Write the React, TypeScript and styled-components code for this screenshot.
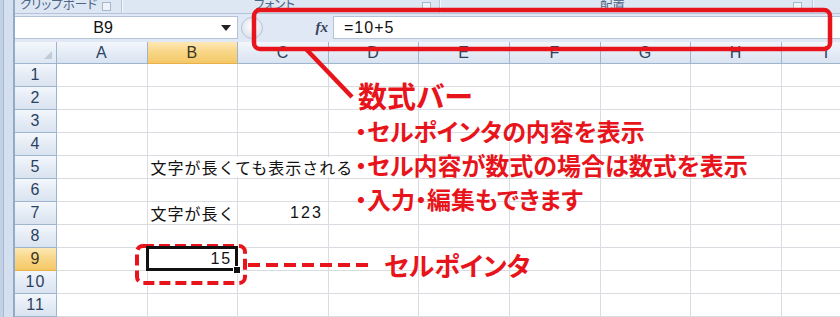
import styled, { createGlobalStyle, css } from 'styled-components'

const GlobalStyle = createGlobalStyle`
    html, body {
        margin: 0;
        padding: 0;
        background: #ffffff;
    }
    * {
        box-sizing: border-box;
    }
`

const RED = '#e8141b'
const COLUMNS = ['A', 'B', 'C', 'D', 'E', 'F', 'G', 'H', 'I']
const ROWS = [1, 2, 3, 4, 5, 6, 7, 8, 9, 10, 11]

interface ICellData {
    text: string
    num?: boolean
    overflow?: boolean
}

const cellData: Record<string, ICellData> = {
    B5: { text: '文字が長くても表示される', overflow: true },
    B7: { text: '文字が長く' },
    C7: { text: '123', num: true },
    B9: { text: '15', num: true },
}

const Screen = styled.div`
    position: relative;
    width: 840px;
    height: 317px;
    overflow: hidden;
    display: flex;
    background: #ffffff;
    font-family: 'Noto Sans CJK JP', 'Liberation Sans', sans-serif;
`

const Gutter = styled.div`
    width: 15px;
    flex: none;
    background: #d4e0ef;
    border-left: 3px solid #c3d1e4;
    border-right: 2px solid #93aac8;
    box-shadow: inset 1px 0 0 #a6b9d2;
`

const Main = styled.div`
    flex: 1;
    display: flex;
    flex-direction: column;
    min-width: 0;
`

const RibbonLabels = styled.div`
    height: 18px;
    display: flex;
    background: #dde7f3;
    border-bottom: 1px solid #b3c4da;
    overflow: hidden;
`

const RibbonGroup = styled.div<{ $width: number }>`
    width: ${(p) => p.$width}px;
    flex: none;
    display: flex;
    align-items: flex-start;
    border-right: 1px solid #b7c8dd;
    box-shadow: 1px 0 0 #f3f7fc;
    position: relative;
`

const RibbonLabel = styled.span<{ $left: number }>`
    margin-top: -6px;
    margin-left: ${(p) => p.$left}px;
    font-size: 12.5px;
    line-height: 20px;
    color: #4f6585;
    font-feature-settings: 'palt';
    white-space: nowrap;
`

const Launcher = styled.span<{ $right: number }>`
    position: absolute;
    top: 2px;
    right: ${(p) => p.$right}px;
    width: 9px;
    height: 9px;
    border: 1px solid #a7b7cc;
    background: #eef3f9;
`

const FormulaBar = styled.div`
    height: 31px;
    padding: 2px 0 3px;
    display: flex;
    align-items: stretch;
    background: #dfe8f4;
`

const NameBox = styled.div`
    width: 223px;
    flex: none;
    display: flex;
    align-items: center;
    background: #ffffff;
    border: 1px solid #b4c2d6;
    border-left: none;
`

const NameText = styled.span`
    width: 176px;
    text-align: center;
    font-family: 'Liberation Sans', sans-serif;
    font-size: 16px;
    color: #111111;
`

const DropArrow = styled.span`
    margin-left: auto;
    margin-right: 6px;
    width: 0;
    height: 0;
    border-left: 5px solid transparent;
    border-right: 5px solid transparent;
    border-top: 6px solid #222222;
`

const RoundButton = styled.span`
    width: 22px;
    height: 22px;
    margin: 1px 0 0 3px;
    flex: none;
    border-radius: 50%;
    border: 1px solid #b9c6d8;
    background: radial-gradient(circle at 50% 40%, #ffffff 0%, #e3e9f1 60%, #cdd6e2 100%);
`

const FxArea = styled.div`
    width: 71px;
    flex: none;
    display: flex;
    align-items: center;
    justify-content: flex-end;
    padding-right: 5px;
    border-right: 1px solid #b4c2d6;
`

const FxGlyph = styled.span`
    font-family: 'Liberation Serif', serif;
    font-style: italic;
    font-weight: bold;
    font-size: 15px;
    color: #394259;
`

const FormulaInput = styled.div`
    flex: 1;
    display: flex;
    align-items: center;
    padding-left: 10px;
    background: #ffffff;
    border-top: 1px solid #b4c2d6;
    border-bottom: 1px solid #b4c2d6;
    font-family: 'Liberation Sans', sans-serif;
    font-size: 16px;
    letter-spacing: 1px;
    color: #111111;
`

const Sheet = styled.div`
    display: grid;
    grid-template-columns: 42px repeat(9, 90.6px);
    grid-template-rows: 22px;
    grid-auto-rows: 23px;
    background: #ffffff;
`

const headerBase = css`
    display: flex;
    align-items: center;
    justify-content: center;
    border-right: 1px solid #9fb4cd;
    border-bottom: 1px solid #9fb4cd;
    font-family: 'Liberation Sans', sans-serif;
    font-size: 16px;
    letter-spacing: 1px;
    color: #2a4160;
`

const HeadCell = styled.div<{ $selected?: boolean }>`
    ${headerBase};
    background: ${(p) =>
        p.$selected
            ? 'linear-gradient(180deg, #fde8b5 0%, #f9d789 45%, #f4c867 100%)'
            : 'linear-gradient(180deg, #f3f7fc 0%, #e4ebf5 55%, #d9e3f0 100%)'};
    ${(p) => p.$selected && 'border-bottom-color: #e9b04a; color: #3c3520;'}
`

const Corner = styled.div`
    ${headerBase};
    position: relative;
    background: linear-gradient(180deg, #f3f7fc 0%, #dde6f2 100%);
    &::after {
        content: '';
        position: absolute;
        right: 4px;
        bottom: 4px;
        border-left: 8px solid transparent;
        border-bottom: 8px solid #c2ccd8;
    }
`

const Cell = styled.div<{ $num?: boolean; $active?: boolean }>`
    position: relative;
    display: flex;
    align-items: flex-end;
    justify-content: ${(p) => (p.$num ? 'flex-end' : 'flex-start')};
    padding: 0 5px 1px 3px;
    border-right: 1px solid #d9dce1;
    border-bottom: 1px solid #d9dce1;
    font-size: 16px;
    line-height: 20px;
    color: #111111;
    white-space: nowrap;
    ${(p) =>
        p.$active &&
        css`
            z-index: 2;
            &::before {
                content: '';
                position: absolute;
                inset: -2px -1px -1px -2px;
                border: 3px solid #111111;
            }
            &::after {
                content: '';
                position: absolute;
                right: -4px;
                bottom: -4px;
                width: 6px;
                height: 6px;
                background: #111111;
                border: 1px solid #ffffff;
            }
        `}
`

const CellText = styled.span<{ $num?: boolean; $overflow?: boolean }>`
    font-family: ${(p) =>
        p.$num ? "'Liberation Sans', sans-serif" : "'Noto Sans CJK JP', sans-serif"};
    letter-spacing: ${(p) => (p.$num ? '2px' : '1px')};
    ${(p) =>
        p.$overflow &&
        css`
            position: relative;
            z-index: 1;
            background: #ffffff;
        `}
`

const Overlay = styled.svg`
    position: absolute;
    left: 0;
    top: 0;
    pointer-events: none;
`

const Callout = styled.div<{ $size: number }>`
    font-family: 'Noto Sans CJK JP', sans-serif;
    font-weight: bold;
    font-size: ${(p) => p.$size}px;
    line-height: 1;
    color: ${RED};
    font-feature-settings: 'palt';
    white-space: nowrap;
`

const PlacedCallout = styled(Callout)<{ $left: number; $top: number }>`
    position: absolute;
    left: ${(p) => p.$left}px;
    top: ${(p) => p.$top}px;
`

const Notes = styled.div`
    position: absolute;
    left: 355px;
    top: 119px;
    display: flex;
    flex-direction: column;
    gap: 10px;
`

const App = () => {
    return (
        <Screen>
            <GlobalStyle />
            <Gutter />
            <Main>
                <RibbonLabels>
                    <RibbonGroup $width={107}>
                        <RibbonLabel $left={5}>クリップボード</RibbonLabel>
                        <Launcher $right={10} />
                    </RibbonGroup>
                    <RibbonGroup $width={318}>
                        <RibbonLabel $left={132}>フォント</RibbonLabel>
                        <Launcher $right={8} />
                    </RibbonGroup>
                    <RibbonGroup $width={373}>
                        <RibbonLabel $left={160}>配置</RibbonLabel>
                        <Launcher $right={10} />
                    </RibbonGroup>
                </RibbonLabels>
                <FormulaBar>
                    <NameBox>
                        <NameText>B9</NameText>
                        <DropArrow />
                    </NameBox>
                    <RoundButton />
                    <FxArea>
                        <FxGlyph>fx</FxGlyph>
                    </FxArea>
                    <FormulaInput>=10+5</FormulaInput>
                </FormulaBar>
                <Sheet>
                    <Corner />
                    {COLUMNS.map((col) => (
                        <HeadCell key={col} $selected={col === 'B'}>
                            {col}
                        </HeadCell>
                    ))}
                    {ROWS.map((row) => [
                        <HeadCell key={`h${row}`} $selected={row === 9}>
                            {row}
                        </HeadCell>,
                        ...COLUMNS.map((col) => {
                            const data = cellData[`${col}${row}`]
                            return (
                                <Cell
                                    key={`${col}${row}`}
                                    $num={data?.num}
                                    $active={col === 'B' && row === 9}
                                >
                                    {data && (
                                        <CellText $num={data.num} $overflow={data.overflow}>
                                            {data.text}
                                        </CellText>
                                    )}
                                </Cell>
                            )
                        }),
                    ])}
                </Sheet>
            </Main>

            <Overlay width="840" height="317" viewBox="0 0 840 317">
                <rect x="254" y="10" width="576" height="39" rx="6" fill="none" stroke={RED} strokeWidth="4.5" />
                <line x1="306" y1="49" x2="352" y2="97" stroke={RED} strokeWidth="4.5" />
                <rect
                    x="137"
                    y="246"
                    width="108"
                    height="37"
                    rx="6"
                    fill="none"
                    stroke={RED}
                    strokeWidth="4"
                    strokeDasharray="11 5"
                />
                <line x1="248" y1="265" x2="370" y2="265" stroke={RED} strokeWidth="4" strokeDasharray="12 6" />
            </Overlay>

            <PlacedCallout $size={29} $left={358} $top={81}>
                数式バー
            </PlacedCallout>
            <Notes>
                <Callout $size={24}>・セルポインタの内容を表示</Callout>
                <Callout $size={24}>・セル内容が数式の場合は数式を表示</Callout>
                <Callout $size={24}>・入力・編集もできます</Callout>
            </Notes>
            <PlacedCallout $size={26} $left={384} $top={252}>
                セルポインタ
            </PlacedCallout>
        </Screen>
    )
}

export default App
